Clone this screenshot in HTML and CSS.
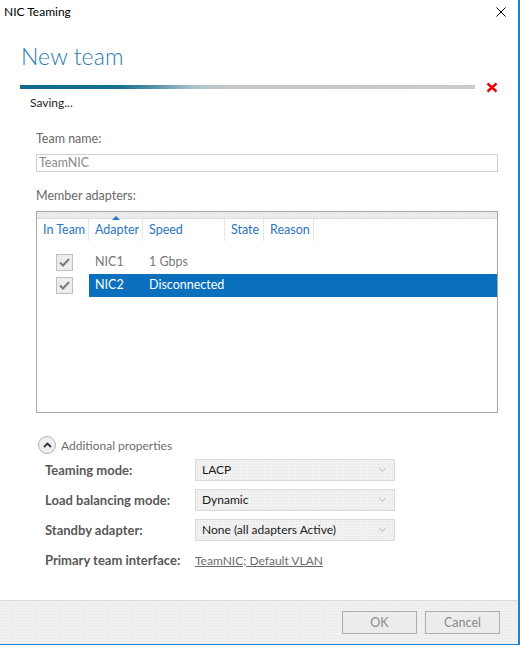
FILE: index.html
```html
<!DOCTYPE html>
<html>
<head>
<meta charset="utf-8">
<link rel="stylesheet" href="styles.css">
</head>
<body>
<div class="window">
  <div class="titlebar">
    <span class="title">NIC Teaming</span>
    <svg class="close" width="10" height="10" viewBox="0 0 10 10"><path d="M0.5 0.5L9.5 9.5M9.5 0.5L0.5 9.5" stroke="#000" stroke-width="1"/></svg>
  </div>
  <div class="content">
    <h1 class="heading">New team</h1>
    <div class="progress-row">
      <div class="progress"></div>
      <svg class="cancel-x" width="12" height="11" viewBox="0 0 12 11"><path d="M1.5 1.5L10.5 9.5M10.5 1.5L1.5 9.5" stroke="#f00000" stroke-width="2.4"/></svg>
    </div>
    <div class="status">Saving...</div>

    <div class="form">
      <div class="label">Team name:</div>
      <div class="textbox">TeamNIC</div>

      <div class="label label-members">Member adapters:</div>
      <div class="listbox">
        <div class="list-strip"></div>
        <div class="list-header">
          <div class="col c-team">In Team</div>
          <div class="col c-adapter sorted">Adapter</div>
          <div class="col c-speed">Speed</div>
          <div class="col c-state">State</div>
          <div class="col c-reason">Reason</div>
        </div>
        <div class="rows">
          <div class="row">
            <div class="cell c-team"><span class="check"><svg width="11" height="9" viewBox="0 0 11 9"><path d="M1 4.5L4 7.5L10 1" fill="none" stroke="#7a7a7a" stroke-width="2"/></svg></span></div>
            <div class="row-data">
              <div class="cell c-adapter">NIC1</div>
              <div class="cell c-speed">1 Gbps</div>
            </div>
          </div>
          <div class="row">
            <div class="cell c-team"><span class="check"><svg width="11" height="9" viewBox="0 0 11 9"><path d="M1 4.5L4 7.5L10 1" fill="none" stroke="#7a7a7a" stroke-width="2"/></svg></span></div>
            <div class="row-data selected">
              <div class="cell c-adapter">NIC2</div>
              <div class="cell c-speed">Disconnected</div>
            </div>
          </div>
        </div>
      </div>

      <div class="more">
        <span class="more-btn"><svg width="9" height="6" viewBox="0 0 9 6"><path d="M1 5L4.5 1.5L8 5" fill="none" stroke="#333" stroke-width="1.8"/></svg></span>
        <span class="more-text">Additional properties</span>
      </div>

      <div class="props">
        <div class="prop">
          <span class="prop-label">Teaming mode:</span>
          <div class="select">LACP<span class="chev"></span></div>
        </div>
        <div class="prop">
          <span class="prop-label">Load balancing mode:</span>
          <div class="select">Dynamic<span class="chev"></span></div>
        </div>
        <div class="prop">
          <span class="prop-label">Standby adapter:</span>
          <div class="select">None (all adapters Active)<span class="chev"></span></div>
        </div>
        <div class="prop">
          <span class="prop-label">Primary team interface:</span>
          <span class="link">TeamNIC; Default VLAN</span>
        </div>
      </div>
    </div>
  </div>
  <div class="footer">
    <button class="btn">OK</button>
    <button class="btn">Cancel</button>
  </div>
</div>
</body>
</html>
```
FILE: styles.css
```css
html, body {
  margin: 0;
  padding: 0;
  background: #ffffff;
}
body {
  font-family: "Lato", "Noto Sans", sans-serif;
  font-size: 12px;
  color: #333;
}
.window {
  box-sizing: border-box;
  width: 520px;
  height: 645px;
  border-right: 2px solid #1883d7;
  border-bottom: 1px solid #1883d7;
  display: flex;
  flex-direction: column;
  background: #fff;
}
.titlebar {
  height: 26px;
  display: flex;
  align-items: center;
  justify-content: space-between;
  padding: 0 12px 0 4px;
  flex: none;
}
.title {
  font-size: 12px;
  color: #000;
  margin-top: -3px;
}
.close {
  margin-top: -2px;
}
.content {
  flex: 1;
  padding: 0 0 0 20px;
}
.heading {
  margin: 14px 0 0 1px;
  font-weight: 300;
  font-size: 23px;
  line-height: 32px;
  color: #2a7ab3;
  letter-spacing: 0.1px;
}
.progress-row {
  display: flex;
  align-items: center;
  margin-top: 9px;
  height: 12px;
}
.progress {
  width: 455px;
  height: 4px;
  background: linear-gradient(to right, #0f6a8c 0%, #16738f 22%, #5a93a8 30%, #a8c3cd 38%, #c8c8c8 45%, #cbcbcb 100%);
}
.cancel-x {
  margin-left: 11px;
}
.status {
  margin: 2px 0 0 10px;
  color: #222;
  line-height: 16px;
}
.form {
  width: 462px;
  margin-left: 16px;
}
.label {
  margin-top: 20px;
  color: #6a6a6a;
  line-height: 16px;
  font-size: 12.5px;
}
.label-members {
  margin-top: 16px;
}
.textbox {
  box-sizing: border-box;
  margin-top: 7px;
  height: 18px;
  border: 1px solid #cfcfcf;
  padding: 0 2px;
  line-height: 16px;
  color: #8a8a8a;
  font-size: 12.5px;
}
.listbox {
  box-sizing: border-box;
  margin-top: 7px;
  height: 202px;
  border: 1px solid #a8a8a8;
}
.list-strip {
  height: 6px;
  background-color: #ececec;
  background-image: radial-gradient(#dcdcdc 0.6px, transparent 0.7px);
  background-size: 3px 3px;
  border-bottom: 1px solid #dddddd;
}
.list-header {
  display: flex;
  height: 22px;
}
.col {
  box-sizing: border-box;
  color: #2b74c0;
  font-size: 12.5px;
  line-height: 22px;
  padding-left: 6px;
  border-right: 1px solid #e6e6e6;
  white-space: nowrap;
}
.sorted {
  position: relative;
}
.sorted::before {
  content: "";
  position: absolute;
  left: 23px;
  top: -3px;
  border-left: 4px solid transparent;
  border-right: 4px solid transparent;
  border-bottom: 4px solid #2b74c0;
}
.c-team { width: 52px; }
.c-adapter { width: 54px; }
.c-speed { width: 82px; }
.c-state { width: 39px; }
.c-reason { width: 50px; }
.rows {
  margin-top: 10px;
}
.row {
  display: flex;
  height: 23px;
  align-items: stretch;
}
.cell {
  box-sizing: border-box;
  padding-left: 6px;
  line-height: 22px;
  color: #777;
  font-size: 12.5px;
  white-space: nowrap;
}
.row .c-team {
  display: flex;
  align-items: center;
  padding-left: 19px;
}
.check {
  box-sizing: border-box;
  width: 17px;
  height: 17px;
  border: 1px solid #c0c0c0;
  background: #ededed;
  display: flex;
  align-items: center;
  justify-content: center;
}
.row-data {
  flex: 1;
  display: flex;
}
.selected {
  background: #0a6fbd;
}
.selected .cell {
  color: #fff;
}
.more {
  display: flex;
  align-items: center;
  margin-top: 22px;
  margin-left: 2px;
  height: 20px;
}
.more-btn {
  box-sizing: border-box;
  width: 18px;
  height: 18px;
  border-radius: 50%;
  border: 1px solid #b4b4b4;
  background: #efefef;
  display: flex;
  align-items: center;
  justify-content: center;
}
.more-text {
  margin-left: 5px;
  color: #6e6e6e;
  font-size: 12px;
}
.props {
  margin-left: 9px;
  margin-top: 4px;
  display: flex;
  flex-direction: column;
  gap: 8px;
}
.prop {
  display: flex;
  align-items: center;
  height: 22px;
}
.prop-label {
  width: 150px;
  font-weight: bold;
  color: #585858;
  font-size: 13px;
}
.select {
  box-sizing: border-box;
  width: 200px;
  height: 22px;
  border: 1px solid #dadada;
  background-color: #f1f1f1;
  background-image: radial-gradient(#e2e2e2 0.6px, transparent 0.7px);
  background-size: 3px 3px;
  padding-left: 6px;
  line-height: 20px;
  color: #1a1a1a;
  font-size: 12px;
  display: flex;
  justify-content: space-between;
  align-items: center;
}
.chev {
  width: 4px;
  height: 4px;
  border-right: 1px solid #c4c4c4;
  border-bottom: 1px solid #c4c4c4;
  transform: rotate(45deg);
  margin-right: 9px;
  margin-top: -3px;
}
.link {
  color: #6a6a6a;
  text-decoration: underline;
  font-size: 12px;
}
.footer {
  flex: none;
  height: 44px;
  box-sizing: border-box;
  border-top: 1px solid #dcdcdc;
  background-color: #f0f0f0;
  background-image: radial-gradient(#e4e4e4 0.6px, transparent 0.7px);
  background-size: 3px 3px;
  display: flex;
  justify-content: flex-end;
  align-items: center;
  gap: 8px;
  padding-right: 18px;
}
.btn {
  box-sizing: border-box;
  width: 75px;
  height: 23px;
  border: 1px solid #adadad;
  background: #ececec;
  color: #8a8a8a;
  font-family: "Lato", "Noto Sans", sans-serif;
  font-size: 12.5px;
  padding: 0;
}
```
